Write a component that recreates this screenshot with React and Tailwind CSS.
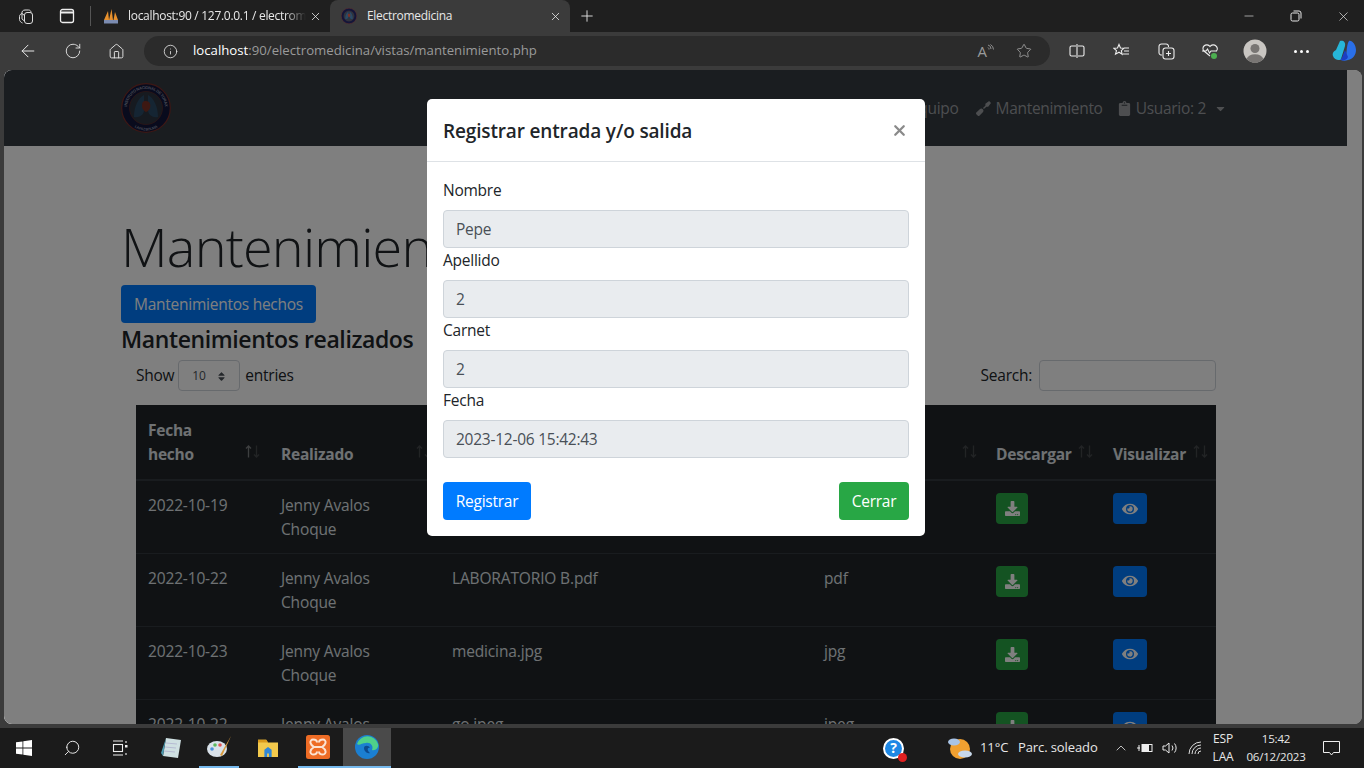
import { FaDownload, FaEye, FaClipboard, FaScrewdriver, FaCaretDown, FaSort } from 'react-icons/fa'
import { ArrowLeft, RotateCw, Home, Info, Star, Search, X, Plus, Minus, ChevronUp } from 'lucide-react'

const FILAS = [
  { fecha: '2022-10-19', archivo: '', tipo: '' },
  { fecha: '2022-10-22', archivo: 'LABORATORIO B.pdf', tipo: 'pdf' },
  { fecha: '2022-10-23', archivo: 'medicina.jpg', tipo: 'jpg' },
  { fecha: '2022-10-22', archivo: 'go.jpeg', tipo: 'jpeg' },
]

const CAMPOS = [
  { label: 'Nombre', valor: 'Pepe' },
  { label: 'Apellido', valor: '2' },
  { label: 'Carnet', valor: '2' },
  { label: 'Fecha', valor: '2023-12-06 15:42:43' },
]

function Sello({ size = 50, conTexto = false }) {
  return (
    <svg width={size} height={size} viewBox="0 0 50 50">
      <circle cx="25" cy="25" r="24.300" fill="#12163a" stroke="#7a2f2a" strokeWidth="1.200" />
      <circle cx="25" cy="25" r="16.500" fill="#2c3540" stroke="#5b2b2b" strokeWidth=".8" />
      <path d="M23 12c-6 3-10 12-10 22 5 1 10-2 10-7zM27 12c6 3 10 12 10 22-5 1-10-2-10-7z" fill="#2b4a66" />
      <path d="M25 18c4 0 5 4 4 7s-4 4-4 4-4-2-4-6 1-5 4-5z" fill="#7a3025" />
      {conTexto && (
        <>
          <defs>
            <path id="arco-sup" d="M7.800 33a19 19 0 1 1 34.400 0" />
            <path id="arco-inf" d="M7.400 39a22.500 22.500 0 0 0 35.200 0" />
          </defs>
          <text fill="#8d93a8" fontSize="4" fontWeight="700" fontFamily="Liberation Sans, sans-serif">
            <textPath href="#arco-sup" startOffset="50%" textAnchor="middle">INSTITUTO NACIONAL DE TORAX</textPath>
          </text>
          <text fill="#8d93a8" fontSize="3.600" fontWeight="700" fontFamily="Liberation Sans, sans-serif">
            <textPath href="#arco-inf" startOffset="50%" textAnchor="middle">LA PAZ BOLIVIA</textPath>
          </text>
        </>
      )}
    </svg>
  )
}

function SortIcon({ activo = false }) {
  return (
    <svg width="15" height="13" viewBox="0 0 15 13" fill="none" strokeWidth="1.300" className="shrink-0">
      <path d="M3.500 12.500V1M1 3.500L3.500 1 6 3.500" stroke={activo ? '#7b7e80' : '#45484b'} />
      <path d="M11.500 .500V12M9 9.500l2.500 2.500 2.500-2.500" stroke="#45484b" />
    </svg>
  )
}

function Caja({ children, w = 'w-[45px]' }) {
  return <div className={`${w} flex items-center justify-center shrink-0`}>{children}</div>
}

function Navegador() {
  return (
    <div className="bg-[#3b3b3b] shrink-0">
      <div className="h-8 bg-[#1f1f1f] flex items-end text-[#e8e8e8]">
        <div className="w-[91px] h-8 flex items-center gap-[24px] pl-[17px] shrink-0">
          <svg width="18" height="18" viewBox="0 0 18 18" fill="none" stroke="#ddd" strokeWidth="1">
            <rect x="7.500" y="5.500" width="8" height="11" rx="2.500" />
            <path d="M7.500 8.500L5 6.500c-.5-2 1-3.500 3-3.500h3.500c1.500 0 2.500 1 2.500 2.500" />
            <path d="M5 6.500C3.500 7 2.500 8 2.500 9.500v3c0 1.500 1.500 3 3 3.500M7.500 14L5 12V6.500" />
          </svg>
          <svg width="16" height="16" viewBox="0 0 16 16" fill="none" stroke="#eee" strokeWidth="1.300">
            <rect x="1.500" y="1.500" width="13" height="13" rx="2" />
            <path d="M2 4.500h12" strokeWidth="2" />
          </svg>
        </div>
        <div className="w-px h-[20px] bg-[#555] mb-[6px] ml-[-1px] shrink-0" />
        <div className="w-[239px] h-8 flex items-center pl-[12px] pr-[8px] text-[12px] tracking-[-0.3px] shrink-0">
          <svg width="16" height="16" viewBox="0 0 16 16" className="shrink-0">
            <path d="M1 12L5 3l1 9zM6 12l2.500-11L10 12zM10.500 12L12 4l3 8z" fill="#e8912d" />
            <rect x="1" y="12" width="14" height="3.500" fill="#7b8bb0" />
          </svg>
          <span className="ml-[9px] w-[178px] overflow-hidden whitespace-nowrap [mask-image:linear-gradient(to_right,black_88%,transparent)]">localhost:90 / 127.0.0.1 / electromedicina</span>
          <X size={13} className="ml-auto shrink-0" strokeWidth={1.500} />
        </div>
        <div className="w-[240px] h-8 bg-[#3b3b3b] rounded-t-lg flex items-center pl-[11px] pr-[8px] text-[12px] tracking-[-0.3px] shrink-0">
          <Sello size={16} />
          <span className="ml-[10px]">Electromedicina</span>
          <X size={13} className="ml-auto shrink-0" strokeWidth={1.500} />
        </div>
        <Plus size={18} strokeWidth={1.200} className="ml-[8px] mb-[7px] shrink-0" />
        <div className="ml-auto h-8 flex items-center gap-[34px] pr-[13px]">
          <Minus size={14} strokeWidth={1.100} />
          <svg width="12" height="12" viewBox="0 0 12 12" fill="none" stroke="#e8e8e8" strokeWidth="1">
            <rect x="1" y="3" width="8" height="8" rx="1.500" />
            <path d="M3.500 1h5.500a2 2 0 0 1 2 2v5.500" />
          </svg>
          <X size={15} strokeWidth={1.100} />
        </div>
      </div>
      <div className="h-[38px] flex items-center text-[#e8e8e8]">
        <div className="w-[144px] flex items-center gap-[26px] pl-[18px] shrink-0">
          <ArrowLeft size={20} strokeWidth={1.200} />
          <RotateCw size={18} strokeWidth={1.200} />
          <Home size={17} strokeWidth={1.300} />
        </div>
        <div className="w-[906px] h-[30px] rounded-full bg-[#2b2b2b] flex items-center pl-[19px] pr-[18px] shrink-0">
          <Info size={15} strokeWidth={1.300} />
          <span className="ml-[15px] text-[13.200px]">
            <span className="text-white">localhost</span>
            <span className="text-[#9a9a9a]">:90/electromedicina/vistas/mantenimiento.php</span>
          </span>
          <span className="ml-auto flex items-start text-[#9a9a9a] text-[15px] leading-none">
            A
            <svg width="7" height="8" viewBox="0 0 7 8" fill="none" stroke="#9a9a9a" strokeWidth=".9">
              <path d="M1 1a4 4 0 0 1 3 4M1 3.500a2 2 0 0 1 1 2M3.500 .500a6 6 0 0 1 3 5" />
            </svg>
          </span>
          <Star size={16} strokeWidth={1.200} className="ml-[22px] text-[#a8a8a8]" />
        </div>
        <div className="flex-1 flex items-center pl-[4px]">
          <Caja>
            <svg width="16" height="14" viewBox="0 0 16 14" fill="none" stroke="#eee" strokeWidth="1.100">
              <path d="M7 2H2.500A1.500 1.500 0 0 0 1 3.500v7A1.500 1.500 0 0 0 2.500 12H7M9 2h4.500A1.500 1.500 0 0 1 15 3.500v7a1.500 1.500 0 0 1-1.500 1.500H9M8 0v14" />
            </svg>
          </Caja>
          <Caja>
            <svg width="17" height="16" viewBox="0 0 17 16" fill="none" stroke="#eee" strokeWidth="1.100">
              <path d="M6 1.500l1.500 3.500 3.500.3-2.700 2.300.9 3.600L6 9.200l-3.500 2 1-3.600L1 5.300l3.500-.3zM11 5h5M11 8h5M10 11h6" />
            </svg>
          </Caja>
          <Caja w="w-[44px]">
            <svg width="17" height="17" viewBox="0 0 17 17" fill="none" stroke="#eee" strokeWidth="1.100">
              <path d="M4 12A2.500 2.500 0 0 1 1 10V3.500A2.500 2.500 0 0 1 3.500 1H8a2.500 2.500 0 0 1 2.500 3" />
              <rect x="5" y="5" width="11" height="11" rx="2.500" />
              <path d="M10.500 8v5M8 10.500h5" />
            </svg>
          </Caja>
          <Caja w="w-[44px]">
            <svg width="18" height="18" viewBox="0 0 18 18" fill="none" stroke="#eee" strokeWidth="1.100">
              <path d="M9 14L3 9a3.500 3.500 0 0 1 0-5 4 4 0 0 1 6 .5 4 4 0 0 1 6-.5 3.500 3.500 0 0 1 .5 5" />
              <path d="M1 9h4l1.500-2 2 4 1.500-2h6" />
              <circle cx="13" cy="14" r="3" fill="#4caf50" stroke="none" />
            </svg>
          </Caja>
          <Caja w="w-[46px]">
            <svg width="24" height="24" viewBox="0 0 24 24">
              <circle cx="12" cy="12" r="11.500" fill="#c9c6c2" />
              <circle cx="12" cy="9.500" r="4.500" fill="#787573" />
              <path d="M3.500 20a9 7 0 0 1 17 0 11.500 11.500 0 0 1-17 0z" fill="#787573" />
            </svg>
          </Caja>
          <Caja w="w-[46px]">
            <span className="flex gap-[3px]">
              <i className="w-[3px] h-[3px] bg-white rounded-full" />
              <i className="w-[3px] h-[3px] bg-white rounded-full" />
              <i className="w-[3px] h-[3px] bg-white rounded-full" />
            </span>
          </Caja>
          <Caja w="w-[40px]">
            <svg width="25" height="25" viewBox="0 0 25 25">
              <path d="M8 2c3-1 6 1 5 5l-4 13c-1 2-7 1-8-3-1-3 1-5 3-6z" fill="#27b6d8" />
              <path d="M17 2c3-1 7 4 7 9s-3 9-8 10c-3 1-7 1-8-1l5-1c2-1 1-13 4-17z" fill="#2a6fe8" />
              <path d="M9 21l4-10 3 7c-1 3-5 4-7 3z" fill="#1b3fc4" />
            </svg>
          </Caja>
        </div>
      </div>
    </div>
  )
}

function Pagina() {
  return (
    <div className="h-full w-[1343px] bg-white text-[#212529] overflow-hidden text-[15.500px] tracking-[-0.25px]">
      <nav className="h-[76px] bg-[#343a40] flex items-center pl-[117px] pr-[120px] tracking-[-0.3px] text-[#9a9da0]">
        <Sello conTexto />
        <div className="ml-auto flex items-center whitespace-nowrap pt-[1px]">
          <span className="mr-[17px]">Equipo</span>
          <FaScrewdriver size={15} className="mr-[5px]" />
          <span className="mr-[14px]">Mantenimiento</span>
          <FaClipboard size={15} className="mr-[4px]" />
          <span>Usuario: 2</span>
          <FaCaretDown size={13} className="ml-[8px]" />
        </div>
      </nav>
      <div className="pl-[117px] pr-[131px] pt-[62px]">
        <h1 className="text-[54px] leading-[76px] tracking-[-0.8px] font-light h-[77px] whitespace-nowrap">Mantenimientos</h1>
        <button className="block w-[195px] h-[38px] pt-[2px] bg-[#007bff] rounded text-white">Mantenimientos hechos</button>
        <h3 className="text-[23px] leading-[32px] tracking-[-0.4px] font-semibold">Mantenimientos realizados</h3>
        <div className="pl-[15px]">
          <div className="flex items-center justify-between h-[30px] mt-[5px]">
            <div className="flex items-center gap-[5px]">
              <span className="mr-[-1px] pt-[1px]">Show</span>
              <span className="w-[62px] h-[31px] border border-[#ced4da] rounded flex items-center justify-between pl-[13px] pr-[12px] pt-[2px] text-[12px] text-[#495057]">
                10
                <FaSort size={11} />
              </span>
              <span className="pt-[1px]">entries</span>
            </div>
            <div className="flex items-center gap-[7px]">
              <span className="pt-[1px]">Search:</span>
              <span className="w-[177px] h-[31px] border border-[#ced4da] rounded bg-white" />
            </div>
          </div>
          <table className="mt-[15px] w-[1080px] table-fixed bg-[#212529] text-[#dee2e6] leading-[24px]">
            <thead>
              <tr className="h-[75px] border-b-2 border-[#32383e] font-bold text-left">
                <th className="w-[134px] pl-[12px] align-bottom pb-[13px]">
                  <div className="flex items-end justify-between pr-[10px]">
                    <span>Fecha<br />hecho</span>
                    <span className="mb-[8px]"><SortIcon activo /></span>
                  </div>
                </th>
                <th className="w-[171px] pl-[11px] align-bottom pb-[13px]">
                  <div className="flex items-end justify-between pr-[10px]">Realizado<span className="mb-[8px]"><SortIcon /></span></div>
                </th>
                <th className="w-[372px] pl-[11px]"></th>
                <th className="w-[172px] align-bottom pb-[13px]">
                  <div className="flex justify-end pr-[8px]"><span className="mb-[8px]"><SortIcon /></span></div>
                </th>
                <th className="w-[117px] pl-[11px] align-bottom pb-[13px]">
                  <div className="flex items-end justify-between pr-[9px]">Descargar<span className="mb-[8px]"><SortIcon /></span></div>
                </th>
                <th className="pl-[11px] align-bottom pb-[13px]">
                  <div className="flex items-end justify-between pr-[8px]">Visualizar<span className="mb-[8px]"><SortIcon /></span></div>
                </th>
              </tr>
            </thead>
            <tbody>
              {FILAS.map((f, i) => (
                <tr key={i} className="h-[73px] border-b border-[#32383e] align-top tracking-[-0.15px]">
                  <td className="pl-[12px] pt-[12px]">{f.fecha}</td>
                  <td className="pl-[11px] pt-[12px] pr-[20px]">Jenny Avalos Choque</td>
                  <td className="pl-[11px] pt-[12px]">{f.archivo}</td>
                  <td className="pl-[11px] pt-[12px]">{f.tipo}</td>
                  <td className="pl-[11px] pt-[12px]">
                    <span className="w-[32px] h-[31px] bg-[#28a745] rounded flex items-center justify-center text-white">
                      <FaDownload size={15} />
                    </span>
                  </td>
                  <td className="pl-[11px] pt-[12px]">
                    <span className="w-[34px] h-[31px] bg-[#007bff] rounded flex items-center justify-center text-white">
                      <FaEye size={16} />
                    </span>
                  </td>
                </tr>
              ))}
            </tbody>
          </table>
        </div>
      </div>
    </div>
  )
}

function Modal() {
  return (
    <div className="absolute left-[423px] top-[29px] w-[498px] h-[437px] bg-white rounded-[5px] text-[#212529] text-[15.500px] tracking-[-0.25px] leading-[24px]">
      <div className="h-[63px] border-b border-[#dee2e6] flex items-center justify-between pl-[16px] pr-[17px]">
        <h5 className="text-[19px] tracking-[-0.15px] font-semibold pt-[1px]">Registrar entrada y/o salida</h5>
        <X size={17} strokeWidth={3.200} className="text-[#8a8a8a]" />
      </div>
      <div className="px-[16px] pt-[16px]">
        {CAMPOS.map((c) => (
          <div key={c.label}>
            <label className="block h-[32px]">{c.label}</label>
            <div className="h-[38px] bg-[#e9ecef] border border-[#ced4da] rounded px-[12px] flex items-center text-[#495057]">{c.valor}</div>
          </div>
        ))}
        <div className="flex justify-between mt-[24px]">
          <button className="w-[88px] h-[38px] bg-[#007bff] text-white rounded">Registrar</button>
          <button className="w-[70px] h-[38px] bg-[#28a745] text-white rounded">Cerrar</button>
        </div>
      </div>
    </div>
  )
}

function BarraTareas() {
  return (
    <div className="h-10 bg-[#1b1b1b] flex items-center text-[#e8e8e8] shrink-0">
      <div className="w-[391px] h-10 flex items-center shrink-0">
        <svg width="16" height="16" viewBox="0 0 16 16" fill="#fff" className="ml-[16px]">
          <path d="M0 2.300l6.500-.9v6.200H0zM7.300 1.300L16 0v7.600H7.300zM0 8.400h6.500v6.200L0 13.700zM7.300 8.400H16V16l-8.700-1.200z" />
        </svg>
        <Search size={18} strokeWidth={1.300} className="ml-[31px] -scale-x-100" />
        <svg width="16" height="16" viewBox="0 0 16 16" fill="none" stroke="#eee" strokeWidth="1.100" className="ml-[31px]">
          <path d="M1 1h10M1 15h10" />
          <rect x="1.500" y="4.500" width="9" height="7" />
          <path d="M14 1v2M14 13v2" />
          <rect x="13" y="5" width="2.500" height="2.500" fill="#eee" stroke="none" />
        </svg>
        <svg width="24" height="24" viewBox="0 0 24 24" className="ml-[31px]">
          <path d="M7 2l15 2-3 18-15-2z" fill="#cfe0e2" />
          <path d="M7 2L2 17l2 3z" fill="#4d9bb0" />
          <path d="M7 7l11 1M6 11l11 1M5 15l11 1" stroke="#aac" strokeWidth=".7" />
        </svg>
        <div className="w-[40px] h-10 ml-[16px] border-b-2 border-[#76b9ed] flex items-center justify-center shrink-0">
          <svg width="25" height="25" viewBox="0 0 25 25">
            <ellipse cx="10" cy="14" rx="10" ry="8" fill="#d9e2ea" />
            <circle cx="5" cy="14" r="1.800" fill="#4a90d9" />
            <circle cx="8" cy="10" r="1.800" fill="#5cb85c" />
            <circle cx="13" cy="10" r="1.800" fill="#e25555" />
            <path d="M24 1l-9 20-2-1z" fill="#d89a3c" />
          </svg>
        </div>
        <svg width="22" height="20" viewBox="0 0 24 22" className="ml-[18px] shrink-0">
          <path d="M1 2h9l2 3h11v16H1z" fill="#f2c94c" />
          <path d="M1 2h9l2 3H1z" fill="#d99a1c" />
          <path d="M8 13l4-3 4 3v8h-3v-4h-2v4H8z" fill="#2f86d6" />
        </svg>
        <div className="w-[45px] h-10 ml-[19px] pr-[5px] border-b-2 border-[#76b9ed] flex items-center justify-center shrink-0">
          <svg width="24" height="24" viewBox="0 0 24 24">
            <rect width="24" height="24" rx="2.500" fill="#ee6c25" />
            <path d="M11 7.500C11 5 8.500 4.500 7 4.500S4 6 4.500 8c.3 1.500 2 3 3.500 4-1.500 1-3.200 2.500-3.500 4-.5 2 1 3.500 2.500 3.500s4-.5 4-3M13 7.500c0-2.500 2.500-3 4-3s3 1.500 2.500 3.500c-.3 1.500-2 3-3.500 4 1.500 1 3.200 2.500 3.500 4 .5 2-1 3.500-2.500 3.500s-4-.5-4-3M8 12h8" fill="none" stroke="#fbe3d3" strokeWidth="2" />
          </svg>
        </div>
        <div className="w-[48px] h-10 bg-[#4a4a4a] border-b-2 border-[#76b9ed] flex items-center justify-center shrink-0">
          <svg width="24" height="24" viewBox="0 0 24 24">
            <circle cx="12" cy="12" r="12" fill="#1b7fd1" />
            <path d="M2 9a11 11 0 0 1 21 0c1 4-3 7-6 6 2-4-2-8-6-7-4 0-7 3-9 1z" fill="#4fd08a" />
            <path d="M9 13c0-3 5-3 6 0-3-1-3 3 0 5-3 1-6-2-6-5z" fill="#0c4a8f" />
          </svg>
        </div>
      </div>
      <div className="relative ml-[492px] shrink-0">
        <span className="w-[21px] h-[21px] rounded-full bg-[#1e88e5] border-2 border-white flex items-center justify-center text-white text-[14px] font-bold leading-none">?</span>
        <span className="absolute -right-[3px] -bottom-[3px] w-[9px] h-[9px] rounded-full bg-[#e02020]" />
      </div>
      <svg width="26" height="24" viewBox="0 0 26 24" className="ml-[43px] shrink-0">
        <circle cx="13" cy="13" r="10" fill="#f0a030" />
        <ellipse cx="7" cy="6" rx="6" ry="3.500" fill="#a9c4e6" />
        <ellipse cx="18" cy="18" rx="7" ry="3.500" fill="#c8d8ea" />
      </svg>
      <span className="ml-[7px] w-[29px] text-[13px] tracking-[-0.1px] whitespace-nowrap shrink-0">11°C</span>
      <span className="ml-[9px] w-[81px] text-[13px] tracking-[-0.1px] whitespace-nowrap shrink-0">Parc. soleado</span>
      <ChevronUp size={16} strokeWidth={1.200} className="ml-[14px] shrink-0" />
      <svg width="16" height="12" viewBox="0 0 16 12" fill="none" stroke="#eee" strokeWidth="1" className="ml-[8px] shrink-0">
        <rect x="5" y="2.500" width="10" height="7" />
        <rect x="5" y="2.500" width="7" height="7" fill="#eee" stroke="none" />
        <path d="M0 6h3M2 3v6" />
      </svg>
      <svg width="16" height="14" viewBox="0 0 16 14" fill="none" stroke="#eee" strokeWidth="1" className="ml-[9px] shrink-0">
        <path d="M1 5h2.500L7 2v10L3.500 9H1zM10 4.500a4 4 0 0 1 0 5M12.500 2.500a7 7 0 0 1 0 9" />
      </svg>
      <svg width="14" height="14" viewBox="0 0 14 14" fill="none" stroke="#ddd" strokeWidth="1" className="ml-[10px] shrink-0">
        <path d="M1 13A12 12 0 0 1 13 1M4 13a9 9 0 0 1 9-9M7 13a6 6 0 0 1 6-6M10 13a3 3 0 0 1 3-3" />
      </svg>
      <div className="ml-[7px] w-[28px] text-[12px] tracking-[-0.2px] leading-[18px] text-center shrink-0">ESP<br />LAA</div>
      <div className="ml-[5px] w-[68px] text-[11.500px] tracking-[-0.2px] leading-[18px] text-center shrink-0">15:42<br />06/12/2023</div>
      <svg width="17" height="15" viewBox="0 0 17 15" fill="none" stroke="#eee" strokeWidth="1" className="ml-[13px] shrink-0">
        <path d="M.500 .500h16v11h-6l-2 2.500-2-2.500h-6z" />
      </svg>
    </div>
  )
}

export default function App() {
  return (
    <div className="h-[768px] flex flex-col overflow-hidden bg-[#3b3b3b] font-['Open_Sans','Liberation_Sans',sans-serif]">
      <Navegador />
      <div className="h-[654px] ml-[4px] mr-[2px] relative rounded-lg overflow-hidden bg-white shrink-0">
        <Pagina />
        <div className="absolute inset-0 bg-black/50" />
        <Modal />
      </div>
      <div className="h-1 shrink-0" />
      <BarraTareas />
    </div>
  )
}
